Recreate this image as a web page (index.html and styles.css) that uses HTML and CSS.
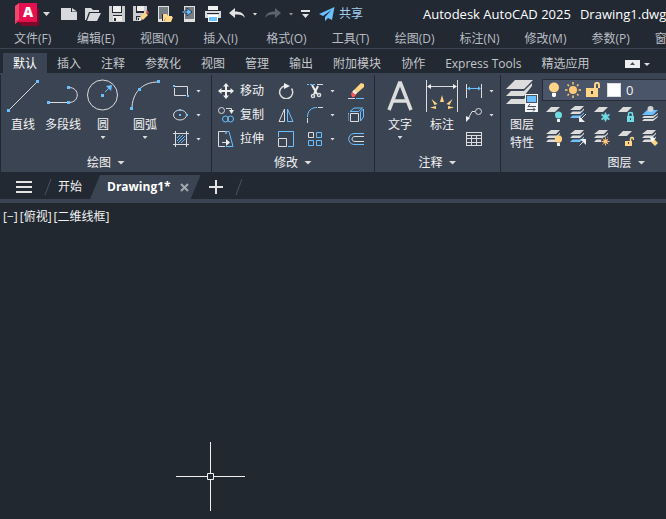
FILE: index.html
```html
<!DOCTYPE html>
<html lang="zh-CN">
<head>
<meta charset="utf-8">
<title>Autodesk AutoCAD 2025 - Drawing1.dwg</title>
<link rel="stylesheet" href="styles.css">
</head>
<body>
<svg class="sprite" aria-hidden="true">
  <symbol id="sheet" viewBox="0 0 16 16"><path fill="#dcdcdc" d="M5 1h9l-5 5H0z"/></symbol>
  <symbol id="stack" viewBox="0 0 16 16"><path fill="#dcdcdc" d="M5 0h9l-4 4H0zM0 8l2.500-2.500h8.500l3-3v1.500l-4 4zM0 12l2.500-2.500h8.500l3-3v1.500l-4 4z"/></symbol>
  <symbol id="stack-blue" viewBox="0 0 16 16"><path fill="#dcdcdc" d="M5 0h9l-4 4H0zM0 8l2.500-2.500h8.500l3-3v1.500l-4 4z"/><path fill="#71c1fa" d="M0 12l2.500-2.500h8.500l3-3v1.500l-4 4z"/></symbol>
  <symbol id="square-dot" viewBox="0 0 3 3"><path fill="#6ac0ff" d="M0 0h3v3H0z"/></symbol>
</svg>

<header class="titlebar">
  <button class="logo" aria-label="应用程序菜单"><svg width="24" height="23" viewBox="0 0 24 23"><path fill="#7d0a28" d="M20 3l4 3v17H7l-4-4z"/><path fill="#f0486a" d="M0 3l4-3v18l-4 3z"/><path fill="#e51050" d="M4 0h18v19H0l4-2z"/><text class="logo-letter" x="13" y="14" text-anchor="middle">A</text></svg><i class="caret mid"></i></button>
  <div class="quick">
    <button aria-label="新建"><svg width="16" height="16"><path fill="#d7d9dc" d="M0 2h10v4h6v8H0zM11 2l5 3.500h-5z"/></svg></button>
    <button aria-label="打开"><svg width="16" height="16"><path fill="#d7d9dc" d="M0 2h6l2 2h6v2H4l-3 8H0zM5 7h11l-4 8H2z"/></svg></button>
    <button aria-label="保存"><svg width="16" height="16"><path fill="#c9cbcd" d="M0 0h3v7h10V0h3v16H0z"/><path fill="#eee" d="M4 0h8v6H4zM4 10h9v5H4z"/><path fill="#222933" d="M4 9h9v1H4zM5 12h2v3H5z"/></svg></button>
    <button aria-label="另存为"><svg width="16" height="16"><path fill="#c9cbcd" d="M0 0h3v7h8V0h3v6l-7 9H0z"/><path fill="#eee" d="M4 0h7v5H4z"/><path fill="#222933" d="M3 10h7v1H4v3H3zM5 12h1v2H5z"/><path fill="#ffd487" d="M12 6l3 3-5 5-3-3z"/><path fill="#f05050" d="M13 5l1-1 2 3-1 1z"/><path fill="#fff" d="M7 12l2 2-3 1z"/></svg></button>
    <button aria-label="从移动设备打开"><svg width="16" height="16"><path fill="#e0e0e0" d="M1 0h11v16H1z"/><path fill="#777d84" d="M2 1h9v12H2z"/><path fill="#222933" d="M5 8h5v7H5z"/><path fill="#ffd98b" d="M6 8h4l1 2h4v1H9l-2 4H6zM9 11h7l-2 5H7z"/></svg></button>
    <button aria-label="保存到移动设备"><svg width="16" height="16"><path fill="#e0e0e0" d="M3 0h11v16H3z"/><path fill="#777d84" d="M4 1h9v12H4z"/><path fill="#6ac0ff" stroke="#222933" stroke-width=".8" d="M1 5h5V2l5 4-5 4V7H1z"/></svg></button>
    <button aria-label="打印"><svg width="16" height="16"><path fill="#f1f1f1" d="M3 0h10v4H3z"/><path fill="#d7d9dc" d="M0 5h16v7H0z"/><path fill="#222933" d="M2 7h12v1H2z"/><path fill="#fff" d="M3 9h10v7H3z"/><path fill="#6ac0ff" d="M4 11h8v4H4z"/></svg></button>
    <button aria-label="放弃"><svg width="16" height="16"><path fill="#e3e3e3" d="M0 7l6-5v3.500c6 0 9 2 10 6.500-2-3-5-4-10-3.500V12z"/></svg></button>
    <button class="tiny" aria-label="放弃列表"><i class="caret"></i></button>
    <button aria-label="重做" disabled><svg width="16" height="16"><path fill="#5c636d" d="M16 7l-6-5v3.500C4 5.500 1 7.500 0 12c2-3 5-4 10-3.500V12z"/></svg></button>
    <button class="tiny dim" aria-label="重做列表"><i class="caret"></i></button>
    <button class="tiny wide" aria-label="自定义快速访问工具栏"><svg width="9" height="8"><path fill="#e3e3e3" d="M0 0h9v2H0zM1 4h7L4.500 8z"/></svg></button>
    <button class="share"><svg width="16" height="14"><path fill="#6ac0ff" d="M15.500 0L0 7l4 2L12.500 3 6 10v4l3-3 4 2z"/></svg>共享</button>
  </div>
  <div class="caption"><span>Autodesk AutoCAD 2025</span><span>Drawing1.dwg</span></div>
</header>

<nav class="menubar" aria-label="菜单栏">
  <button>文件(F)</button><button>编辑(E)</button><button>视图(V)</button><button>插入(I)</button><button>格式(O)</button><button>工具(T)</button><button>绘图(D)</button><button>标注(N)</button><button>修改(M)</button><button>参数(P)</button><button>窗</button>
</nav>

<nav class="tabs" aria-label="功能区选项卡">
  <button class="active">默认</button><button>插入</button><button>注释</button><button>参数化</button><button>视图</button><button>管理</button><button>输出</button><button>附加模块</button><button>协作</button><button>Express Tools</button><button>精选应用</button>
  <button class="minimize" aria-label="最小化功能区"><svg width="25" height="8"><path fill="#eee" d="M0 0h15v8H0z"/><path fill="#444c58" d="M5 5l2.500-3L10 5z"/><path fill="#ddd" d="M19 3h6l-3 3z"/></svg></button>
</nav>

<main class="ribbon">
  <section class="panel">
    <div class="tools">
      <button class="big"><svg width="34" height="34"><path class="w" d="M4 30L30 4"/><use href="#square-dot" x="1" y="30" width="3" height="3"/><use href="#square-dot" x="30" y="1" width="3" height="3"/></svg>直线</button>
      <button class="big"><svg width="34" height="34"><path class="w" d="M3 23.500h18M23 8.500c11 0 11 15 0 15"/><use href="#square-dot" x="1" y="22" width="3" height="3"/><use href="#square-dot" x="21" y="22" width="3" height="3"/><use href="#square-dot" x="21" y="7" width="3" height="3"/></svg>多段线</button>
      <button class="big"><svg width="34" height="34"><circle class="w" cx="16.500" cy="16" r="15"/><path class="b" d="M19 13l5-5"/><path fill="#6ac0ff" d="M20 7l6-1-1 6z"/><use href="#square-dot" x="15" y="15" width="3" height="3"/></svg>圆<i class="caret"></i></button>
      <button class="big arc"><svg width="34" height="34"><path class="w" d="M4 30C4 14 14 3 30 3"/><use href="#square-dot" x="2" y="28" width="3" height="3"/><use href="#square-dot" x="10" y="9" width="3" height="3"/><use href="#square-dot" x="29" y="1" width="3" height="3"/></svg>圆弧<i class="caret"></i></button>
      <div class="grid draw">
        <button aria-label="矩形"><svg width="18" height="16"><path class="w" d="M4 3.500h12.500V12M15 12.500H3.500V5"/><use href="#square-dot" x="2" y="2" width="2" height="2"/><use href="#square-dot" x="16" y="12" width="2" height="2"/></svg></button><button aria-label="矩形选项"><i class="caret"></i></button>
        <button aria-label="椭圆"><svg width="18" height="16"><ellipse class="w" cx="9" cy="8" rx="6.500" ry="5"/><use href="#square-dot" x="8" y="2" width="2" height="2"/><use href="#square-dot" x="8" y="7" width="2" height="2"/><use href="#square-dot" x="15" y="7" width="2" height="2"/></svg></button><button aria-label="椭圆选项"><i class="caret"></i></button>
        <button aria-label="图案填充"><svg width="18" height="16"><path class="w" d="M2 2.500h16M2 13.500h16M4.500 0v16M15.500 0v16"/><path class="b" d="M6 7l3-3M6 10l6-6M7 12l7-7M10 12l4-4"/></svg></button><button aria-label="图案填充选项"><i class="caret"></i></button>
      </div>
    </div>
    <button class="foot">绘图<i class="caret big-caret"></i></button>
  </section>

  <section class="panel">
    <div class="tools modify-tools">
      <div class="grid modify">
        <button class="text"><svg width="16" height="16"><path fill="#eee" d="M8 0l3 3.500H9V7h3.500V5L16 8l-3.500 3V9H9v3.500h2L8 16l-3-3.500h2V9H3.500v2L0 8l3.500-3v2H7V3.500H5z"/></svg>移动</button>
        <button aria-label="旋转"><svg width="16" height="16"><path class="w" stroke-width="1.500" d="M7 2.800A6.500 6.500 0 1 0 13.500 5.500"/><path fill="#eee" d="M6 0l6 3-6 3z"/></svg></button>
        <button aria-label="修剪"><svg width="16" height="16"><path class="b" stroke-dasharray="2 1" d="M0 1.500h9"/><path class="w" d="M10 1.500h6"/><path fill="none" stroke="#eee" stroke-width="2" d="M5 2l5 9M11 3l-4 8"/><circle class="w" stroke-width="1.500" cx="6" cy="13" r="1.600"/><circle class="w" stroke-width="1.500" cx="12" cy="12" r="1.600"/></svg></button><button aria-label="修剪选项"><i class="caret"></i></button>
        <button aria-label="删除"><svg width="16" height="16"><path fill="#ffd487" d="M13 0l3 1v3l-8 7-3-3z"/><path fill="#eee" d="M6 7l3 3-2 2-3-3z"/><path fill="#ff5656" d="M4 9l4 3-2 2H4l-1-3z"/><path class="w" d="M0 15.500h7"/><path class="b" d="M8 15.500h8"/></svg></button>

        <button class="text"><svg width="16" height="16"><circle class="w" cx="3.500" cy="3.500" r="3"/><circle class="b" cx="7.500" cy="12" r="3"/><circle class="b" cx="12.500" cy="12" r="3"/><path class="w" d="M8 1.500h5.500V4"/><path fill="#eee" d="M11 3h5l-2.500 4z"/></svg>复制</button>
        <button aria-label="镜像"><svg width="16" height="16"><path class="w" d="M6.500 2v12.500H1z"/><path class="b" d="M9.500 2v12.500H15z"/></svg></button>
        <button aria-label="圆角"><svg width="16" height="16"><path class="w" d="M.5 16v-5M11 .5h5"/><path class="b" d="M.5 10C.5 4 4 .5 10 .5"/></svg></button><button aria-label="圆角选项"><i class="caret"></i></button>
        <button aria-label="分解"><svg width="16" height="16"><path class="w" d="M2.500 6.500h8v8h-8z"/><path class="b" d="M0 14V6.500h1M2 4.500l4-3.500h8.500l-4 3.500zM12.500 5L15.500 2v8l-3 4z"/></svg></button>

        <button class="text"><svg width="16" height="16"><path class="w" d="M8 3V.5H.5v15H7M4 11.500h6"/><path class="b" d="M7 .5h4l4 15H8"/><path fill="#eee" d="M8 8l4 3.500L8 15z"/></svg>拉伸</button>
        <button aria-label="缩放"><svg width="16" height="16"><path class="w" d="M.5 7.500h8v8h-8z"/><path class="b" d="M.5 6V.5h15v15H10"/></svg></button>
        <button aria-label="阵列"><svg width="16" height="16"><path class="w" d="M1.500 1.500h5v5h-5z"/><path class="b" d="M9.500 1.500h5v5h-5zM1.500 9.500h5v5h-5zM9.500 9.500h5v5h-5z"/></svg></button><button aria-label="阵列选项"><i class="caret"></i></button>
        <button aria-label="偏移"><svg width="16" height="16"><path class="b" d="M16 2.500H6C-1 3-1 13 6 13.500h10"/><path class="w" d="M16 5.500H7c-4 0-4 5 0 5h9"/></svg></button>
      </div>
    </div>
    <button class="foot">修改<i class="caret big-caret"></i></button>
  </section>

  <section class="panel">
    <div class="tools annotate-tools">
      <button class="big"><svg width="34" height="34"><path fill="none" stroke="#dcdcdc" stroke-width="3.500" d="M6 31L16.500 4h1L28 31M10 22h14"/></svg>文字<i class="caret"></i></button>
      <button class="big dimension"><svg width="34" height="34"><path class="w" d="M1.500 1v32M32.500 1v32M3 7.500h28"/><path fill="#eee" d="M2 7.500L6 5v5zM32 7.500L28 5v5z"/><path fill="#ffd487" d="M15 23l2-7 2 7zM12.500 25l-6-5 3 6zM21.500 25l6-5-3 6zM11 27l-6 1.500 6 1.500zM23 27l6 1.500-6 1.500z"/></svg>标注</button>
      <div class="grid annotate">
        <button aria-label="线性标注"><svg width="16" height="16"><path class="w" d="M.5 1v14M15.500 1v14"/><path class="b" d="M2 5.500h12"/><path fill="#6ac0ff" d="M1 5.500L4 3.500v4zM15 5.500l-3-2v4z"/></svg></button><button aria-label="标注选项"><i class="caret"></i></button>
        <button aria-label="多重引线"><svg width="16" height="16"><circle class="w" cx="12.500" cy="4.500" r="3"/><path class="w" d="M9 4.500H6L2 12"/><path fill="#eee" d="M0 9l4 2-4 4z"/></svg></button><button aria-label="引线选项"><i class="caret"></i></button>
        <button aria-label="表格"><svg width="16" height="16"><path fill="#dcdcdc" d="M0 1h16v14H0z"/><path fill="#3b4453" d="M1 2h14v2H1zM1 5h4v2H1zM6 5h4v2H6zM11 5h4v2h-4zM1 8h4v3H1zM6 8h4v3H6zM11 8h4v3h-4zM1 12h4v2H1zM6 12h4v2H6zM11 12h4v2h-4z"/></svg></button>
      </div>
    </div>
    <button class="foot">注释<i class="caret big-caret"></i></button>
  </section>

  <section class="panel">
    <div class="tools layer-tools">
      <button class="big"><svg width="34" height="34"><path fill="#dcdcdc" d="M10 1h18l-9 9H1zM1 17l5-5h13l8-8v3l-8 10zM1 25l5-5h13l2-2v7z"/><path fill="#f4f4f4" d="M20 15h13v18H20z"/><path fill="#4a5361" d="M21 16h11v8H21z"/><path fill="#6ac0ff" d="M22 17h9v6h-9z"/><path fill="none" stroke="#4a5361" d="M23 27.500h8M25 25l-2 2.500M22 30.500h8M28 28.500l2 2-2 2"/></svg>图层<br>特性</button>
      <div class="layers">
        <div class="combo">
          <svg width="12" height="16"><circle cx="6" cy="5.500" r="5" fill="#ffd487"/><path fill="#fff" d="M4 11h4v3L7 15H5l-1-1z"/></svg>
          <svg width="16" height="16"><circle cx="8" cy="8" r="4" fill="#ffc978"/><path stroke="#ffc978" stroke-width="1.500" d="M8 0v2.500M8 13.500V16M0 8h2.500M13.500 8H16M2.500 2.500L4 4M12 12l1.500 1.500M2.500 13.500L4 12M12 4l1.500-1.500"/></svg>
          <svg width="16" height="16"><path fill="#ffd487" d="M0 6h12v9H0z"/><path fill="none" stroke="#ffd487" stroke-width="2" d="M9 7V3c0-3 4-3 4 0v3"/><path fill="#3b4453" d="M5 9h2v3H5z"/></svg>
          <i class="swatch"></i>
          <select aria-label="图层"><option>0</option></select>
        </div>
        <div class="grid layer">
          <button aria-label="关闭图层"><svg width="16" height="16"><use href="#sheet"/><circle cx="12.500" cy="9" r="3.500" fill="#6fdbe3"/><path fill="#eee" d="M11 13h3v3h-3z"/></svg></button>
          <button aria-label="隔离"><svg width="16" height="16"><use href="#stack-blue"/><path fill="none" stroke="#3b4453" stroke-width="3" d="M16 8l-6 6"/><path class="w" d="M16 8l-5 5"/><path fill="#eee" d="M9 10v6h6z"/></svg></button>
          <button aria-label="冻结"><svg width="16" height="16"><use href="#sheet"/><path stroke="#6fdbe3" stroke-width="1.500" d="M11.500 6.500v9M7.500 8.500l8 5M7.500 13.500l8-5"/><circle cx="11.500" cy="11" r="2.500" fill="none" stroke="#6fdbe3"/></svg></button>
          <button aria-label="锁定"><svg width="16" height="16"><use href="#sheet"/><path fill="#6fdbe3" d="M9 10h7v6H9z"/><path fill="none" stroke="#6fdbe3" stroke-width="1.500" d="M10.500 10V8c0-2 4-2 4 0v2"/><path fill="#3b4453" d="M12 12h1v2h-1z"/></svg></button>
          <button aria-label="置为当前"><svg width="16" height="16"><path fill="#6ac0ff" d="M5 4h11l-5 5H0z"/><path fill="#dcdcdc" d="M0 12l2-2h9l5-3v1l-5 4zM0 15l2-2h9l5-3v1l-5 4z"/><circle cx="8.500" cy="3" r="3" fill="#cfd1d3"/></svg></button>
          <button aria-label="打开所有图层"><svg width="16" height="16"><use href="#stack"/><circle cx="12.500" cy="9" r="3.700" fill="#ffd487"/><path fill="#eee" d="M11 13h3v3h-3z"/></svg></button>
          <button aria-label="取消隔离"><svg width="16" height="16"><use href="#stack-blue"/><path fill="none" stroke="#3b4453" stroke-width="3" d="M16 9l-6 6"/><path class="w" d="M9.500 15.500L14 11"/><path fill="#eee" d="M10 9h6v6z"/></svg></button>
          <button aria-label="解冻所有图层"><svg width="16" height="16"><use href="#stack"/><circle cx="11.500" cy="11.500" r="4.500" fill="#3b4453"/><circle cx="11.500" cy="11.500" r="2.300" fill="#ffc978"/><path stroke="#ffc978" stroke-dasharray="1.500 5" d="M11.500 7.500v8M7.500 11.500h8M8.500 8.500l6 6M8.500 14.500l6-6"/></svg></button>
          <button aria-label="解锁"><svg width="16" height="16"><use href="#sheet"/><path fill="#ffd487" d="M7 11h7v5H7z"/><path fill="none" stroke="#ffd487" stroke-width="1.500" d="M12.500 11V9c0-2 3-2 3 0v1"/><path fill="#3b4453" d="M10 12h1v2h-1z"/></svg></button>
          <button aria-label="匹配图层"><svg width="16" height="16"><use href="#stack"/><path fill="#ffd487" d="M12 9l4 4-3 3-4-4z"/><path fill="#fff" d="M8 8l3-1 2 2-3 3z"/></svg></button>
        </div>
      </div>
    </div>
    <button class="foot">图层<i class="caret big-caret"></i></button>
  </section>
</main>

<nav class="files" aria-label="文件选项卡">
  <button aria-label="菜单"><svg width="16" height="12"><path fill="#e3e3e3" d="M0 0h16v2H0zM0 5h16v2H0zM0 10h16v2H0z"/></svg></button>
  <svg class="slash" width="8" height="16"><path stroke="#4b5360" d="M1 16L7 0"/></svg>
  <button class="start">开始</button>
  <div class="doc"><a href="#drawing">Drawing1*</a><button aria-label="关闭"><svg width="9" height="9"><path stroke="#a3a9b2" stroke-width="2" d="M1 1l7 7M8 1L1 8"/></svg></button></div>
  <button class="new" aria-label="新图形"><svg width="14" height="14"><path fill="#e3e3e3" d="M6 0h2v6h6v2H8v6H6V8H0V6h6z"/></svg></button>
  <svg class="slash" width="8" height="16"><path stroke="#4b5360" d="M1 16L7 0"/></svg>
</nav>

<section class="canvas" id="drawing">
  <div class="view"><button>[−]</button><button>[俯视]</button><button>[二维线框]</button></div>
  <svg class="crosshair" width="69" height="69"><path fill="none" stroke="#f0f0f0" d="M34.500 0v31M34.500 38v31M0 34.500h31M38 34.500h31M31.500 31.500h6v6h-6z"/></svg>
</section>
</body>
</html>
```
FILE: styles.css
```css
* { box-sizing: border-box; }

body {
  margin: 0;
  min-height: 100vh;
  display: flex;
  flex-direction: column;
  overflow: hidden;
  background: #222933;
  color: #f2f2f2;
  font: 12px/18px "Open Sans", "Noto Sans CJK SC", sans-serif;
  white-space: nowrap;
}

button, select {
  margin: 0;
  padding: 0;
  border: 0;
  background: none;
  color: inherit;
  font: inherit;
}

svg { display: block; flex: none; }
.sprite { position: absolute; width: 0; height: 0; }
.w { fill: none; stroke: #dcdcdc; }
.b { fill: none; stroke: #6ac0ff; }

.caret {
  display: block;
  flex: none;
  width: 5px;
  height: 3px;
  background: #dcdcdc;
  clip-path: polygon(0 0, 100% 0, 50% 100%);
}
.caret.mid { width: 7px; height: 4px; }
.caret.big-caret { width: 8px; height: 4px; }

.titlebar { display: flex; height: 28px; align-items: center; padding-left: 15px; }
.logo { display: flex; align-items: center; gap: 4px; margin-right: 11px; }
.logo-letter { fill: #fff; font-size: 14px; font-weight: 800; }
.quick { display: flex; align-items: center; gap: 8px; }
.tiny { width: 4px; display: flex; justify-content: center; }
.tiny.wide { width: 9px; margin: 0 1px 0 0; }
.dim { opacity: .6; }
.share { display: flex; align-items: center; gap: 4px; color: #a0cdf0; }
.caption { display: flex; gap: 9px; margin-left: 60px; color: #fff; font-size: 13px; }

.menubar {
  display: flex;
  gap: 25px;
  height: 21px;
  padding: 2px 0 0 14px;
  border-bottom: 1px solid #3b4453;
  color: #b9bdc2;
}
.menubar button { flex: none; min-width: 38px; text-align: left; }
.menubar button:last-child { min-width: 0; }

.tabs { display: flex; height: 26px; padding: 4px 0 0 3px; border-bottom: 2px solid #3b4453; color: #c3c6ca; }
.tabs button { padding: 2px 10px 0; }
.tabs .active { background: #3b4453; color: #fff; }
.tabs .minimize { margin-left: 16px; }

.ribbon { display: flex; gap: 1px; padding-left: 1px; overflow: hidden; }
.panel { flex: none; background: #3b4453; }
.tools { display: flex; height: 77px; padding: 4px 0 0 2px; }
.big { display: flex; flex-direction: column; align-items: center; width: 40px; }
.big svg { margin-bottom: 3px; }
.big .caret { margin-top: 2px; }
.arc { width: 44px; }
.foot { display: flex; width: 100%; height: 20px; padding-top: 1px; align-items: center; justify-content: center; gap: 6px; }

.grid { display: grid; grid-auto-rows: 24px; align-items: center; }
.grid button { height: 24px; display: flex; align-items: center; }
.draw { grid-template-columns: 25px 15px; padding-left: 4px; }
.modify { grid-template-columns: 60px 29px 23px 18px 26px; }
.grid .text { gap: 6px; }
.modify-tools { padding-left: 6px; }
.annotate-tools { padding-left: 5px; }
.dimension { width: 44px; }
.annotate { grid-template-columns: 23px 11px; padding-left: 2px; }
.draw, .modify, .annotate { height: 72px; }

.layer-tools { padding-left: 1px; }
.combo {
  display: flex;
  align-items: center;
  gap: 5px;
  width: 210px;
  height: 22px;
  padding-left: 5px;
  border: 1px solid #262d38;
  background: #4a5569;
}
.swatch { width: 14px; height: 14px; background: #fff; border: 1px solid #ddd; }
.combo select { appearance: none; flex: 1; font-size: 13px; }
.layer { grid-template-columns: repeat(5, 24px); padding: 1px 0 0 4px; }

.files { display: flex; height: 31px; align-items: center; padding: 3px 0 0 16px; border-bottom: 4px solid #3b4453; }
.slash { margin: 0 6px 0 12px; }
.start { margin-right: 8px; }
.doc {
  display: flex;
  align-items: center;
  align-self: stretch;
  gap: 9px;
  padding: 0 12px 0 17px;
  background: #3b4453;
  clip-path: polygon(10px 0, 100% 0, calc(100% - 10px) 100%, 0 100%);
}
.doc a { color: #fff; font-weight: 700; text-decoration: none; }
.new { margin-left: 8px; }

.canvas { position: relative; flex: 1; background: #212830; padding: 5px 3px; }
.view { display: flex; gap: 2px; }
.crosshair { position: absolute; left: 176px; top: 239px; }
```
